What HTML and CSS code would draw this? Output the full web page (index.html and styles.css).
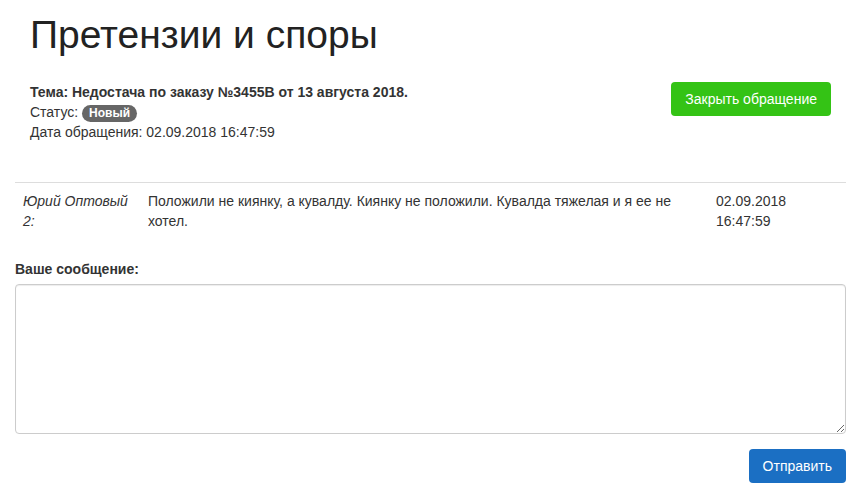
FILE: index.html
```html
<!DOCTYPE html>
<html>
    <head>
        <meta charset="utf-8">
        <title>Претензии и споры</title>
        <link rel="stylesheet" href="styles.css">
    </head>
    <body>
        <div class="container">
            <div class="claim-head">
                <h1>Претензии и споры</h1>
                <div class="claim-info">
                    <div class="claim-text">
                        <div class="topic">Тема: Недостача по заказу №3455B от 13 августа 2018.</div>
                        <div>Статус: <span class="badge">Новый</span></div>
                        <div>Дата обращения: 02.09.2018 16:47:59</div>
                    </div>
                    <button class="btn btn-green">Закрыть обращение</button>
                </div>
            </div>

            <table class="messages">
                <tr>
                    <td class="author">Юрий Оптовый 2:</td>
                    <td class="msg">Положили не киянку, а кувалду. Киянку не положили. Кувалда тяжелая и я ее не хотел.</td>
                    <td class="date">02.09.2018 16:47:59</td>
                </tr>
            </table>

            <form class="reply">
                <label for="message">Ваше сообщение:</label>
                <textarea id="message"></textarea>
                <div class="reply-actions">
                    <button type="button" class="btn btn-blue">Отправить</button>
                </div>
            </form>
        </div>
    </body>
</html>
```

FILE: styles.css
```css
body {
    margin: 0;
    font-family: "Liberation Sans", Arial, sans-serif;
    font-size: 14px;
    line-height: 20px;
    color: #333;
    background: #fff;
}
.container {
    padding: 0 5px 0 15px;
}
.claim-head {
    padding: 0 15px;
}
h1 {
    margin: 13px 0 26px;
    font-size: 39px;
    font-weight: 500;
    line-height: 43px;
    color: #222;
}
.claim-info {
    display: flex;
    justify-content: space-between;
    align-items: flex-start;
}
.topic {
    font-weight: bold;
}
.badge {
    display: inline-block;
    padding: 2px 7px 2px;
    font-size: 12px;
    font-weight: bold;
    line-height: 13px;
    color: #fff;
    background-color: #666;
    border-radius: 9px;
    vertical-align: 0;
}
.btn {
    display: inline-block;
    padding: 7px 14px;
    font-family: inherit;
    font-size: 14px;
    line-height: 20px;
    color: #fff;
    border: 0;
    border-radius: 4px;
    cursor: pointer;
}
.btn-green {
    background-color: #34c315;
}
.btn-blue {
    background-color: #1b6fc3;
}
.messages {
    width: 100%;
    margin-top: 40px;
    margin-bottom: 20px;
    border-collapse: collapse;
}
.messages td {
    padding: 8px;
    vertical-align: top;
    border-top: 1px solid #ddd;
}
.author {
    width: 109px;
    font-style: italic;
}
.date {
    width: 122px;
}
.reply label {
    display: block;
    margin-bottom: 5px;
    font-weight: bold;
}
.reply textarea {
    display: block;
    box-sizing: border-box;
    width: 100%;
    height: 150px;
    margin: 0;
    padding: 6px 12px;
    font-family: inherit;
    font-size: 14px;
    border: 1px solid #ccc;
    border-radius: 4px;
    box-shadow: inset 0 1px 1px rgba(0,0,0,0.075);
}
.reply-actions {
    display: flex;
    justify-content: flex-end;
    margin-top: 15px;
}
```
